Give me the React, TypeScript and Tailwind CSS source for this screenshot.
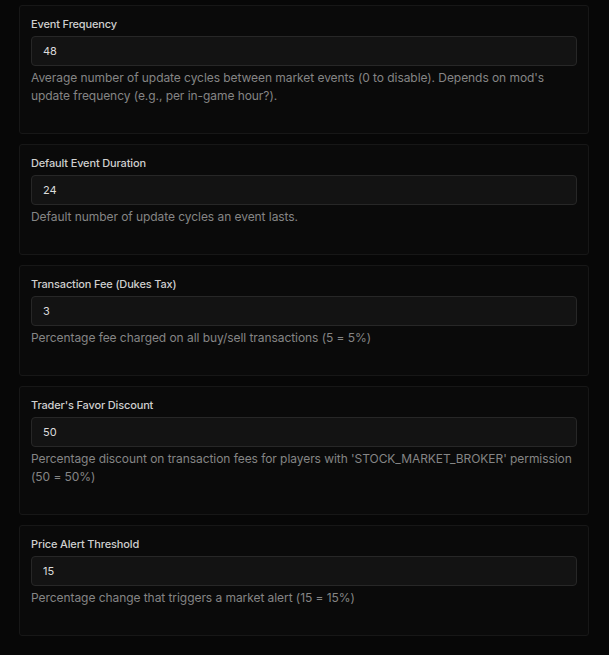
const settings = [
  {
    label: "Event Frequency",
    value: "48",
    help: "Average number of update cycles between market events (0 to disable). Depends on mod's update frequency (e.g., per in-game hour?).",
  },
  { label: "Default Event Duration", value: "24", help: "Default number of update cycles an event lasts." },
  {
    label: "Transaction Fee (Dukes Tax)",
    value: "3",
    help: "Percentage fee charged on all buy/sell transactions (5 = 5%)",
  },
  {
    label: "Trader's Favor Discount",
    value: "50",
    help: "Percentage discount on transaction fees for players with 'STOCK_MARKET_BROKER' permission (50 = 50%)",
  },
  {
    label: "Price Alert Threshold",
    value: "15",
    help: "Percentage change that triggers a market alert (15 = 15%)",
  },
];

export default function App() {
  return (
    <div className="min-h-[655px] bg-[#070707] pl-[19px] pr-[20px] pt-[5px] pb-[18px] font-['Inter',sans-serif]">
      <div className="flex flex-col gap-[10px]">
        {settings.map((s) => (
          <div key={s.label} className="rounded-[3px] border border-[#171717] bg-[#0a0a0a] px-[11px] pt-[11px] pb-[28px]">
            <label className="block text-[11px] leading-[14px] font-medium tracking-[-0.15px] text-[#cfcfcf]">{s.label}</label>
            <input
              defaultValue={s.value}
              className="mt-[5px] block h-[30px] w-full rounded-[4px] border border-[#272727] bg-[#131313] px-[11px] text-[11px] text-[#dcdcdc] outline-none"
            />
            <p className="mt-[3px] text-[12px] leading-[18px] tracking-[-0.06px] text-[#858585]">{s.help}</p>
          </div>
        ))}
      </div>
    </div>
  );
}
